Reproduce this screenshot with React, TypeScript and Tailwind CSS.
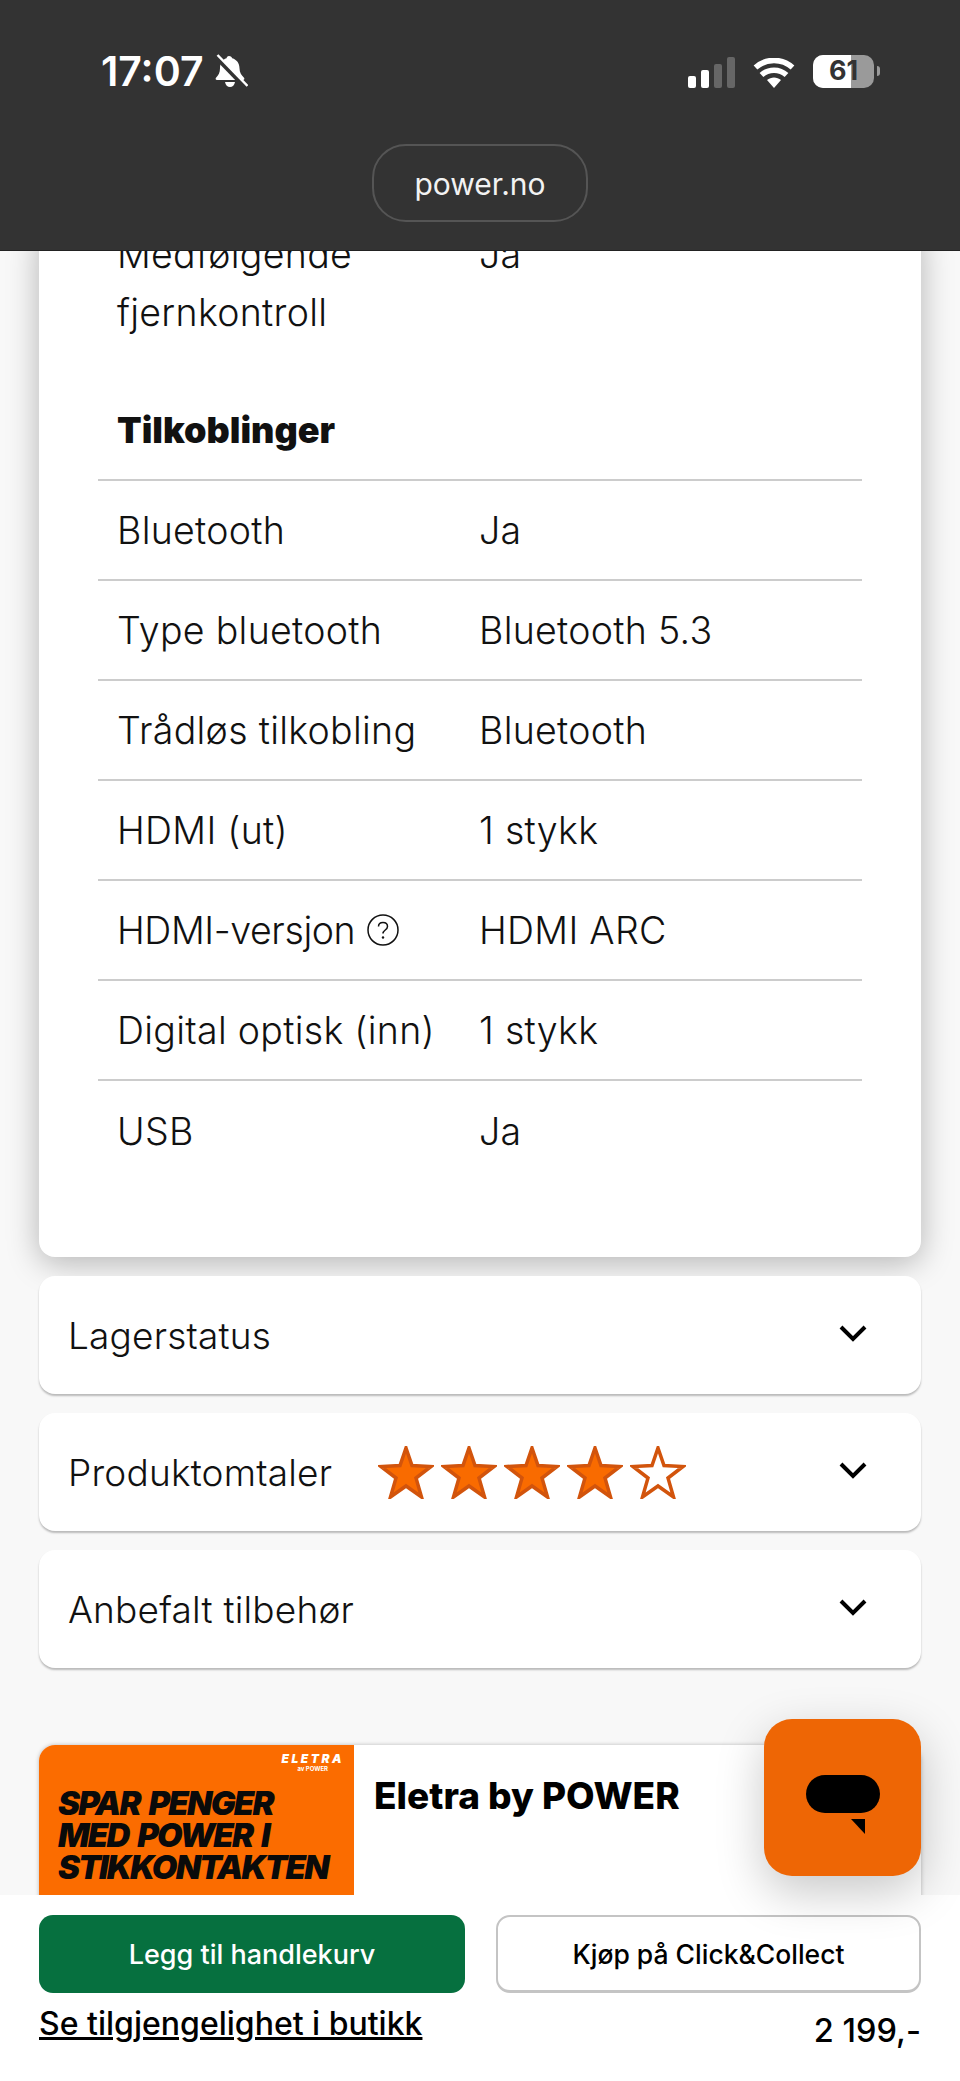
import { ReactNode } from "react";

const specs = [
  { label: "Bluetooth", value: "Ja" },
  { label: "Type bluetooth", value: "Bluetooth 5.3" },
  { label: "Trådløs tilkobling", value: "Bluetooth" },
  { label: "HDMI (ut)", value: "1 stykk" },
  { label: "HDMI-versjon", value: "HDMI ARC", help: true },
  { label: "Digital optisk (inn)", value: "1 stykk" },
  { label: "USB", value: "Ja" },
];

function BellSlash() {
  return (
    <svg width="34" height="34" viewBox="0 0 34 34" className="ml-[10px]">
      <path
        d="M15 2c1.800 0 2.900 1 3.200 2.300 4.500 1.300 7.300 5 7.300 10 0 4.500 2 7 4.500 9.500.8.900.3 2.200-1 2.200H3c-1.300 0-1.800-1.300-1-2.200 2.500-2.500 4-5 4-9.500 0-5 2.200-8.700 6.500-10C12.800 3 13.400 2 15 2z"
        fill="#fff"
      />
      <path d="M11 28h10c-.5 3-2.500 5-5 5s-4.500-2-5-5z" fill="#fff" />
      <path d="M2 3l30 31" stroke="#333" strokeWidth="4.500" />
      <path d="M3.500 1l30 31" stroke="#fff" strokeWidth="2.500" />
    </svg>
  );
}

function Signal() {
  return (
    <div className="flex items-end gap-[5px]">
      <div className="w-[8px] h-[12px] rounded-[2px] bg-white" />
      <div className="w-[8px] h-[18px] rounded-[2px] bg-white" />
      <div className="w-[8px] h-[24px] rounded-[2px] bg-[#666]" />
      <div className="w-[8px] h-[31px] rounded-[2px] bg-[#666]" />
    </div>
  );
}

function Wifi() {
  return (
    <svg width="42" height="30" viewBox="0 0 42 30">
      <path d="M21 30l-7-8c4-3.500 10-3.500 14 0z" fill="#fff" />
      <path d="M8.500 17c7-6.500 18-6.500 25 0" stroke="#fff" strokeWidth="5.500" fill="none" />
      <path d="M2.500 9.500c10.500-9.500 26.500-9.500 37 0" stroke="#fff" strokeWidth="5.500" fill="none" />
    </svg>
  );
}

function Battery() {
  return (
    <div className="flex items-center gap-[3px]">
      <div className="relative flex h-[33px] w-[61px] overflow-hidden rounded-[10px] bg-[#9a9a9a]">
        <div className="w-[38px] bg-white" />
        <span className="absolute inset-0 flex items-center justify-center text-[27px] font-bold text-[#333]">61</span>
      </div>
      <div className="h-[10px] w-[3px] rounded-r-full bg-[#9a9a9a]" />
    </div>
  );
}

function Chevron() {
  return (
    <svg width="28" height="17" viewBox="0 0 28 17" fill="none">
      <path d="M2 2l12 12L26 2" stroke="#000" strokeWidth="4" />
    </svg>
  );
}

function Star({ filled }: { filled: boolean }) {
  return (
    <svg width="56" height="53" viewBox="0 0 56 53">
      <polygon
        points="28,2 34,19.500 53,20.500 38,32 43.500,51 28,40 12.500,51 18,32 3,20.500 22,19.500"
        fill={filled ? "#f96b00" : "#fff"}
        stroke="#d2540c"
        strokeWidth="3.500"
      />
    </svg>
  );
}

function HelpIcon() {
  return (
    <svg width="32" height="32" viewBox="0 0 32 32" fill="none" className="ml-[12px] -mt-[2px]">
      <circle cx="16" cy="16" r="15" stroke="#111" strokeWidth="1.500" />
      <path d="M11.500 12.500c0-2.500 2-4 4.500-4s4.500 1.500 4.500 4c0 3.500-4.500 3.500-4.500 7" stroke="#111" strokeWidth="1.500" />
      <circle cx="16" cy="23.500" r="1.200" fill="#111" />
    </svg>
  );
}

function Accordion({ children }: { children: ReactNode }) {
  return (
    <div className="flex h-[118px] items-center justify-between rounded-2xl bg-white pl-[29px] pr-[54px] pt-[1px] shadow-[0_2px_2px_rgba(0,0,0,0.25)]">
      <div className="flex items-center">{children}</div>
      <div className="-mt-[4px]">
        <Chevron />
      </div>
    </div>
  );
}

export default function App() {
  return (
    <div className="relative flex h-[2081px] w-[960px] flex-col overflow-hidden bg-[#f8f8f8] font-['Inter',sans-serif] text-[#111]">
      <header className="relative z-10 h-[251px] shrink-0 border-b border-[#222] bg-[#333] text-white">
        <div className="flex items-center justify-between pl-[101px] pr-[80px] pt-[54px]">
          <div className="flex items-center">
            <span className="text-[41px] leading-[34px] font-semibold">17:07</span>
            <BellSlash />
          </div>
          <div className="flex items-end gap-[18px]">
            <Signal />
            <Wifi />
            <Battery />
          </div>
        </div>
        <div className="mt-[56px] flex justify-center">
          <div className="flex h-[78px] w-[216px] items-center justify-center rounded-[34px] border-2 border-[#555] pt-[2px] text-[30px] text-[#f2f2f2]">
            power.no
          </div>
        </div>
      </header>

      <main className="min-h-0 flex-1 overflow-hidden px-[39px] font-light">
        <div className="-mt-[25px] rounded-2xl bg-white px-[59px] pb-[76px] shadow-[0_6px_32px_rgba(0,0,0,0.28)]">
          <div className="flex px-[19px] text-[37.500px] leading-[58px] tracking-[0.3px]">
            <div className="w-[362px]">
              Medfølgende
              <br />
              fjernkontroll
            </div>
            <div>Ja</div>
          </div>
          <div className="mt-[63px] border-b-2 border-[#ccc] px-[19px] pb-[24px] text-[36px] leading-[50px] font-black">
            Tilkoblinger
          </div>
          {specs.map((row, i) => (
            <div
              key={row.label}
              className={`flex h-[100px] items-center px-[19px] pt-[2px] text-[37.500px] tracking-[0.3px] ${i < specs.length - 1 ? "border-b-2 border-[#ccc]" : ""}`}
            >
              <div className="flex w-[362px] items-center">
                <span className={row.help ? "tracking-[-0.4px]" : ""}>{row.label}</span>
                {row.help && <HelpIcon />}
              </div>
              <div>{row.value}</div>
            </div>
          ))}
        </div>

        <div className="mt-[19px] flex flex-col gap-[19px] text-[37px] tracking-[0.2px]">
          <Accordion>Lagerstatus</Accordion>
          <Accordion>
            <span>Produktomtaler</span>
            <div className="ml-[46px] flex gap-[7px]">
              {[true, true, true, true, false].map((filled, i) => (
                <Star key={i} filled={filled} />
              ))}
            </div>
          </Accordion>
          <Accordion>Anbefalt tilbehør</Accordion>
        </div>

        <div className="mt-[77px] flex h-[300px] rounded-2xl bg-white shadow-[0_0_4px_rgba(0,0,0,0.25)]">
          <div className="w-[315px] rounded-tl-2xl bg-[#fb6c00] pl-[19px] pt-[8px]">
            <div className="pr-[10px] text-right text-[12px] leading-[11px] font-black tracking-[2.500px] text-white italic">ELETRA</div>
            <div className="pr-[26px] text-right text-[6px] leading-[9px] font-bold text-white">av POWER</div>
            <div className="mt-[14px] text-[33px] leading-[32px] font-black tracking-[-1.800px] [word-spacing:4px] text-[#0a0a0a] italic">
              SPAR PENGER
              <br />
              MED POWER I
              <br />
              STIKKONTAKTEN
            </div>
          </div>
          <div className="pl-[20px] pt-[26px] text-[37px] leading-[50px] font-extrabold text-black">Eletra by POWER</div>
        </div>
      </main>

      <div className="absolute left-[764px] top-[1719px] z-20 flex h-[157px] w-[157px] items-center justify-center rounded-[28px] bg-[#ee6605] shadow-[0_16px_48px_rgba(0,0,0,0.22)]">
        <svg width="74" height="60" viewBox="0 0 74 60" className="mt-[14px]">
          <rect x="0" y="0" width="74" height="38" rx="19" fill="#000" />
          <polygon points="45,44 59,44 59,59" fill="#000" />
        </svg>
      </div>

      <footer className="relative z-10 h-[186px] shrink-0 bg-white px-[39px] pt-[20px]">
        <div className="flex gap-[31px]">
          <button className="h-[78px] w-[426px] rounded-[14px] bg-[#06703f] pt-[2px] text-[27px] font-medium text-white">Legg til handlekurv</button>
          <button className="h-[78px] w-[425px] rounded-[14px] border-2 border-b-[3px] border-[#c4c4c4] bg-white pt-[2px] text-[26.500px] font-medium text-black">
            Kjøp på Click&amp;Collect
          </button>
        </div>
        <div className="flex items-start justify-between">
          <a className="mt-[9px] text-[32px] leading-[44px] font-medium text-black underline">Se tilgjengelighet i butikk</a>
          <span className="mt-[16px] text-[32.500px] leading-[44px] font-medium text-black">2 199,-</span>
        </div>
      </footer>
    </div>
  );
}
